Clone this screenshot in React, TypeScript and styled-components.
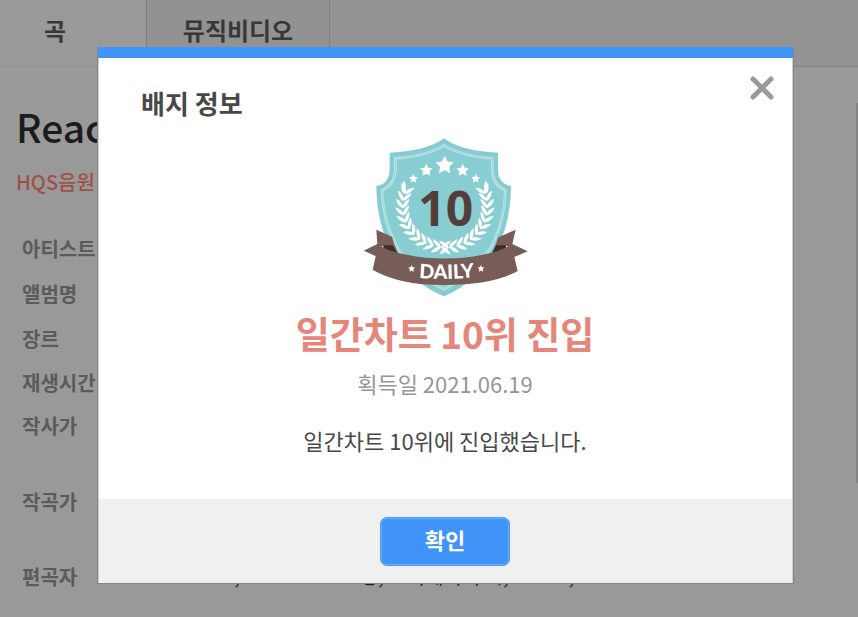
import React from "react";
import styled, { createGlobalStyle } from "styled-components";

const GlobalStyle = createGlobalStyle`
  * { box-sizing: border-box; }
  html, body, #root { height: 100%; }
  body {
    margin: 0;
    background: #999999;
    color: #222222;
    font-family: "Noto Sans CJK KR", "Noto Sans", sans-serif;
  }
`;

const Page = styled.div`
  position: relative;
  height: 100%;
  min-height: 617px;
  overflow: hidden;
`;

const Tabs = styled.nav`
  display: flex;
  height: 67px;
  background: #939393;
  border-bottom: 1px solid #838383;
`;

const Tab = styled.button<{ $active?: boolean }>`
  width: ${(p) => (p.$active ? 147 : 183)}px;
  height: ${(p) => (p.$active ? 67 : 66)}px;
  padding: 0 ${(p) => (p.$active ? 36 : 0)}px 6px 0;
  border: 0;
  border-right: 1px solid #808080;
  border-bottom: ${(p) => (p.$active ? "1px solid #8f8f8f" : "0")};
  background: ${(p) => (p.$active ? "#999999" : "#929292")};
  color: #383838;
  font: 700 24px/36px "Noto Sans CJK KR", sans-serif;
`;

const Song = styled.main`
  padding: 29px 16px 0;
`;

const SongTitle = styled.h1`
  margin: 0;
  font: 500 39px/60px "Noto Sans CJK KR", sans-serif;
  color: #1c1c1c;
`;

const Quality = styled.p`
  margin: 11px 0 0;
  font-size: 20px;
  font-weight: 500;
  line-height: 30px;
  color: #a0504b;
`;

const Facts = styled.dl`
  display: grid;
  grid-template-columns: 136px 1fr;
  grid-template-rows: 45px 45px 44px 43px 76px 75px 45px;
  margin: 37px 0 0;
  padding-left: 6px;
  line-height: 30px;
`;

const FactName = styled.dt`
  font-size: 20px;
  font-weight: 700;
  color: #5b5b5b;
  white-space: nowrap;
`;

const FactValue = styled.dd`
  margin: 0;
  padding-left: 66px;
  font-size: 20px;
  line-height: 28px;
  color: #222222;
  white-space: nowrap;
`;

const ScrollThumb = styled.div`
  position: absolute;
  top: 103px;
  right: 0;
  width: 2px;
  height: 380px;
  background: #858585;
`;

const Overlay = styled.div`
  position: absolute;
  inset: 0;
  padding: 47px 64px 0 97px;
`;

const Dialog = styled.section`
  position: relative;
  border: 1px solid #848484;
  border-width: 0 1px 1px;
  background: #ffffff;
  box-shadow: inset 1px 0 #cfcfcf, inset -1px 0 #cfcfcf;
`;

const Accent = styled.div`
  height: 11px;
  background: #4095f8;
`;

const DialogHead = styled.header`
  display: flex;
  justify-content: space-between;
  align-items: flex-start;
  height: 72px;
  padding: 17px 18px 0 43px;
`;

const DialogTitle = styled.h2`
  margin: 9px 0 0;
  font-size: 26px;
  font-weight: 700;
  line-height: 38px;
  color: #484848;
`;

const CloseButton = styled.button`
  width: 26px;
  height: 26px;
  padding: 0;
  border: 0;
  background: transparent;
  svg { display: block; }
`;

const DialogBody = styled.div`
  display: flex;
  flex-direction: column;
  align-items: center;
  height: 369px;
  padding-right: 1px;
  text-align: center;
`;

const Award = styled.h3`
  margin: 0;
  font-size: 37px;
  font-weight: 700;
  line-height: 56px;
  color: #e68579;
`;

const AwardDate = styled.p`
  margin: 6px 0 0;
  font-size: 22px;
  font-weight: 400;
  line-height: 32px;
  color: #969696;
`;

const Message = styled.p`
  margin: 25px 0 0;
  font-size: 22px;
  font-weight: 400;
  line-height: 32px;
  color: #484848;
`;

const DialogFoot = styled.footer`
  display: flex;
  justify-content: center;
  padding: 18px 1px 17px 0;
  margin: 0 1px;
  background: #f0f0f0;
`;

const ConfirmButton = styled.button`
  width: 130px;
  height: 49px;
  padding: 0 0 6px;
  border: 1px solid #4a9bf8;
  border-radius: 7px;
  box-shadow: inset 0 0 0 1px #65b0f8;
  background: #4094f8;
  color: #ffffff;
  font: 700 22px/32px "Noto Sans CJK KR", sans-serif;
`;

const star = (cx: number, cy: number, r: number) =>
  Array.from({ length: 10 }, (_, i) => {
    const a = (Math.PI / 5) * i - Math.PI / 2;
    const d = i % 2 ? r * 0.5 : r;
    return `${(cx + d * Math.cos(a)).toFixed(1)},${(cy + d * Math.sin(a)).toFixed(1)}`;
  }).join(" ");

const SHIELD =
  "M282 25Q328 62 444 68V118Q444 162 483 168Q482 290 432 370Q370 462 282 499Q190 462 132 370Q80 290 79 168Q119 162 119 118V68Q234 62 282 25Z";

const INNER_SHIELD =
  "M282 46Q336 78 427 85V122Q430 166 466 181Q463 282 418 360Q360 442 282 478Q202 442 146 360Q100 282 96 181Q133 166 136 122V85Q228 78 282 46Z";

const leaf = "M0 3C-8 -6 -9 -22 0 -35C9 -22 8 -6 0 3Z";

function LaurelSide() {
  return (
    <g fill="#fff">
      {Array.from({ length: 12 }, (_, i) => {
        const deg = 86 + i * 10.3;
        const a = (deg * Math.PI) / 180;
        const x = 285 + 127 * Math.cos(a);
        const y = 230 + 122 * Math.sin(a);
        return (
          <g key={i} transform={`translate(${x} ${y}) rotate(${deg - 180})`}>
            <path d={leaf} transform="rotate(-36) scale(.8 .94)" />
            <path d={leaf} transform="rotate(40) scale(.8 .94)" />
          </g>
        );
      })}
      <path d={leaf} transform="translate(160 187) rotate(4)" />
    </g>
  );
}

function DailyBadge() {
  return (
    <svg width="190" height="175" viewBox="0 0 570 525" role="img" aria-label="DAILY 10">
      <path d={SHIELD} fill="#85cbd2" />
      <path d={INNER_SHIELD} fill="#88cdd2" stroke="#c0e6e9" strokeWidth="8" />
      <path d={INNER_SHIELD} fill="none" stroke="#88cdd2" strokeWidth="2" />
      <polygon points={star(284, 106, 29)} fill="#fff" />
      <polygon points={star(229, 121, 20)} fill="#fff" />
      <polygon points={star(338, 121, 20)} fill="#fff" />
      <polygon points={star(190, 146, 14)} fill="#fff" />
      <polygon points={star(377, 146, 14)} fill="#fff" />
      <LaurelSide />
      <g transform="translate(570 0) scale(-1 1)">
        <LaurelSide />
      </g>
      <text x="287" y="287" textAnchor="middle" fontFamily="Noto Sans, sans-serif" fontWeight="700" fontSize="144" fill="#543d3a">10</text>
      <path d="M79 299L126 320Q132 346 146 372L101 347L86 351L84 420L70 419L81 380L41 362L82 342ZM497 299L445 322Q438 348 424 372L467 347L484 351L490 420L501 423L491 382L533 364L487 342Z" fill="#785c58" />
      <path d="M100 346L128 346L148 382L100 362ZM468 346L438 346L420 382L468 362Z" fill="#402d2b" />
      <path d="M85 343Q112 365 170 374Q284 397 398 374Q454 363 484 343L503 423Q430 465 282 465Q145 465 68 419Z" fill="#785c58" />
      <path id="daily-curve" d="M180 441Q284 453 396 439" fill="none" />
      <text fontFamily="Lato, sans-serif" fontWeight="900" fontSize="59" fill="#fff" textAnchor="middle">
        <textPath href="#daily-curve" startOffset="51%">DAILY</textPath>
      </text>
      <polygon points={star(185, 416, 11)} fill="#fff" />
      <polygon points={star(393, 416, 11)} fill="#fff" />
    </svg>
  );
}

const facts: { name: string; value?: string }[] = [
  { name: "아티스트" },
  { name: "앨범명" },
  { name: "장르" },
  { name: "재생시간" },
  { name: "작사가" },
  { name: "작곡가" },
  { name: "편곡자", value: "J, Mitchell Lee 영, 크리에이터 시, Andre, Lee" },
];

export default function App() {
  return (
    <Page>
      <GlobalStyle />
      <Tabs>
        <Tab $active>곡</Tab>
        <Tab>뮤직비디오</Tab>
      </Tabs>
      <Song>
        <SongTitle>Reac</SongTitle>
        <Quality>HQS음원</Quality>
        <Facts>
          {facts.map((f) => (
            <React.Fragment key={f.name}>
              <FactName>{f.name}</FactName>
              <FactValue>{f.value}</FactValue>
            </React.Fragment>
          ))}
        </Facts>
      </Song>
      <ScrollThumb />
      <Overlay>
        <Dialog role="dialog" aria-modal="true" aria-labelledby="badge-title">
          <Accent />
          <DialogHead>
            <DialogTitle id="badge-title">배지 정보</DialogTitle>
            <CloseButton aria-label="닫기">
              <svg width="26" height="26" viewBox="0 0 26 26">
                <path d="M4 4L22 22M22 4L4 22" stroke="#9a9a9a" strokeWidth="5" strokeLinecap="round" />
              </svg>
            </CloseButton>
          </DialogHead>
          <DialogBody>
            <DailyBadge />
            <Award>일간차트 10위 진입</Award>
            <AwardDate>획득일 2021.06.19</AwardDate>
            <Message>일간차트 10위에 진입했습니다.</Message>
          </DialogBody>
          <DialogFoot>
            <ConfirmButton>확인</ConfirmButton>
          </DialogFoot>
        </Dialog>
      </Overlay>
    </Page>
  );
}
